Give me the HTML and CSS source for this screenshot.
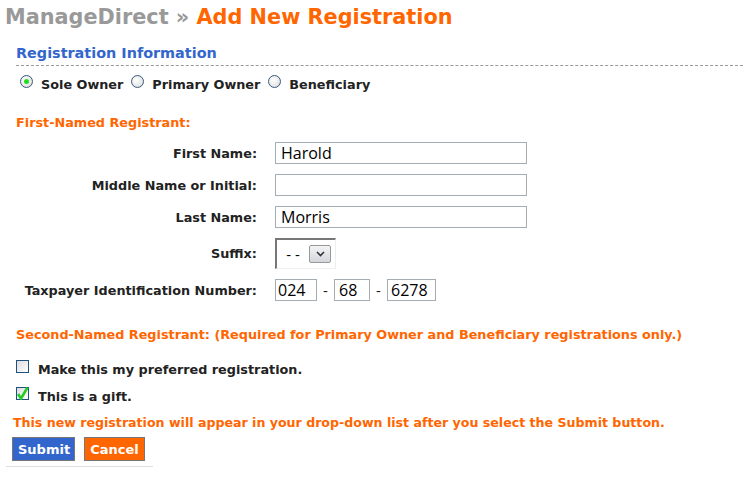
FILE: index.html
```html
<!DOCTYPE html>
<html>
<head>
<meta charset="utf-8">
<link rel="stylesheet" href="styles.css">
</head>
<body>
<div class="page">
  <h1 class="title"><span class="crumb">ManageDirect »</span> <span class="current">Add New Registration</span></h1>
  <div class="section">
    <h2 class="section-title">Registration Information</h2>
    <div class="radios">
      <label class="radio-item"><span class="radio checked"></span>Sole Owner</label>
      <label class="radio-item"><span class="radio"></span>Primary Owner</label>
      <label class="radio-item"><span class="radio"></span>Beneficiary</label>
    </div>
    <h3 class="sub-title first">First-Named Registrant:</h3>
    <div class="form-grid">
      <div class="label">First Name:</div>
      <div class="field"><span class="input wide">Harold</span></div>
      <div class="label">Middle Name or Initial:</div>
      <div class="field"><span class="input wide"></span></div>
      <div class="label">Last Name:</div>
      <div class="field"><span class="input wide">Morris</span></div>
      <div class="label">Suffix:</div>
      <div class="field"><span class="select"><span class="select-text">- -</span><span class="select-btn"><svg width="9" height="6" viewBox="0 0 9 6"><path d="M1 1 L4.5 4.5 L8 1" fill="none" stroke="#333" stroke-width="1.6"/></svg></span></span></div>
      <div class="label">Taxpayer Identification Number:</div>
      <div class="field tin"><span class="input tin1">024</span><span class="dash">-</span><span class="input tin2">68</span><span class="dash">-</span><span class="input tin3">6278</span></div>
    </div>
    <h3 class="sub-title second">Second-Named Registrant: (Required for Primary Owner and Beneficiary registrations only.)</h3>
    <label class="check-item pref"><span class="checkbox"></span>Make this my preferred registration.</label>
    <label class="check-item gift"><span class="checkbox checked"><svg width="12" height="13" viewBox="0 0 12 13"><path d="M1 7 L4 11.5 L10.5 0.5" fill="none" stroke="#22cc22" stroke-width="2.6"/></svg></span>This is a gift.</label>
    <p class="notice">This new registration will appear in your drop-down list after you select the Submit button.</p>
    <div class="actions">
      <button class="btn submit">Submit</button>
      <button class="btn cancel">Cancel</button>
    </div>
  </div>
</div>
</body>
</html>
```
FILE: styles.css
```css
html, body {
  margin: 0;
  padding: 0;
  background: #fff;
}
body {
  font-family: "DejaVu Sans", Verdana, sans-serif;
  font-weight: bold;
  font-size: 12.8px;
  color: #222;
}
.page {
  padding: 4px 0 0 5px;
  width: 738px;
}
.title {
  margin: 0;
  font-size: 20.8px;
  line-height: 26px;
  font-weight: bold;
}
.crumb { color: #999; }
.current { color: #ff6600; }
.section {
  padding-left: 11px;
}
.section-title {
  margin: 14px 0 0 0;
  font-size: 14.4px;
  line-height: 18px;
  color: #3366cc;
  padding-bottom: 3px;
  border-bottom: 1px dashed #999;
}
.radios {
  display: flex;
  align-items: center;
  margin-top: 9px;
  padding-left: 4px;
  height: 18px;
}
.radio-item {
  display: flex;
  align-items: center;
  margin-right: 8px;
  color: #222;
}
.radio {
  width: 11px;
  height: 11px;
  border-radius: 50%;
  border: 1px solid #3a5a7a;
  background: radial-gradient(circle at 40% 40%, #fff 0, #e8e8e8 60%, #ccc 100%);
  margin-right: 8px;
  position: relative;
  top: -3px;
  box-sizing: content-box;
}
.radio.checked::after {
  content: "";
  position: absolute;
  left: 3px;
  top: 3px;
  width: 5px;
  height: 5px;
  border-radius: 50%;
  background: #22dd22;
}
.sub-title {
  margin: 0;
  font-size: 12.8px;
  line-height: 16px;
  color: #ff6600;
}
.sub-title.first { margin-top: 22px; }
.form-grid {
  display: grid;
  grid-template-columns: 241px auto;
  column-gap: 18px;
  row-gap: 10px;
  margin-top: 11px;
  align-items: center;
}
.label {
  text-align: right;
  color: #222;
}
.field {
  display: flex;
  align-items: center;
}
.input {
  display: inline-block;
  box-sizing: border-box;
  height: 22px;
  border: 1px solid #a5acb2;
  font-family: "Open Sans", "DejaVu Sans", sans-serif;
  font-weight: normal;
  font-size: 16px;
  line-height: 20px;
  padding: 0 5px;
  color: #000;
  background: #fff;
}
.input.wide { width: 252px; }
.tin1 { width: 42px; padding-left: 2px; }
.tin2 { width: 36px; padding-left: 4px; }
.tin3 { width: 49px; padding-left: 3px; }
.dash {
  font-family: "Open Sans", sans-serif;
  font-weight: normal;
  font-size: 15px;
  width: 17px;
  text-align: center;
  color: #222;
}
.select {
  display: inline-flex;
  align-items: center;
  box-sizing: border-box;
  width: 61px;
  height: 31px;
  border-top: 2px solid #777;
  border-left: 2px solid #777;
  border-right: 1px solid #eee;
  border-bottom: 1px solid #eee;
  background: #fff;
}
.select-text {
  font-family: "Open Sans", sans-serif;
  font-weight: normal;
  font-size: 15px;
  width: 32px;
  text-align: center;
  color: #000;
}
.select-btn {
  display: inline-flex;
  align-items: center;
  justify-content: center;
  box-sizing: border-box;
  width: 22px;
  height: 18px;
  border: 1px solid #999;
  border-radius: 2px;
  background: linear-gradient(#f4f4f6, #d4d6dc);
}
.sub-title.second { margin-top: 26px; }
.check-item {
  display: flex;
  align-items: center;
  color: #222;
}
.checkbox {
  display: inline-block;
  box-sizing: border-box;
  width: 13px;
  height: 13px;
  border: 1px solid #1c5180;
  background: linear-gradient(135deg, #dcdcdc, #fff);
  margin-right: 9px;
  position: relative;
  top: -3px;
}
.checkbox svg {
  position: absolute;
  left: 0;
  top: -1px;
}
.check-item.pref { margin-top: 19px; }
.check-item.gift { margin-top: 12px; }
.notice {
  margin: 11px 0 0 -3px;
  color: #ff6600;
  line-height: 16px;
  font-size: 12.6px;
}
.actions {
  display: flex;
  gap: 9px;
  margin: 6px 0 0 -10px;
  padding: 0 0 5px 6px;
  width: 141px;
  border-bottom: 1px solid #ddd;
}
.btn {
  font-family: "DejaVu Sans", Verdana, sans-serif;
  font-weight: bold;
  font-size: 13px;
  color: #fff;
  height: 24px;
  padding: 0 5px;
  border: 1px solid #777;
  border-radius: 0;
}
.submit { background: #3366cc; width: 63px; }
.cancel { background: #ff6600; width: 61px; }
```
